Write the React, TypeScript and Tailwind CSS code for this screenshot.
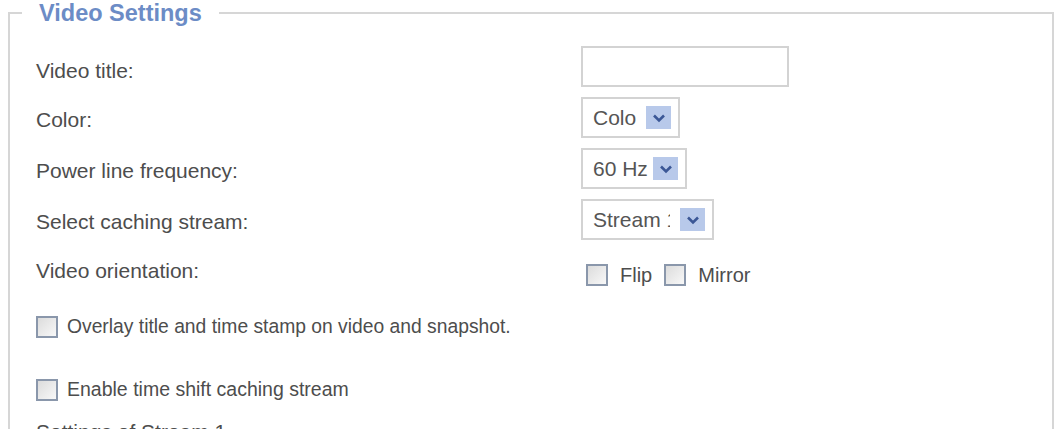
import React from 'react';

const Chevron = () => (
  <span className="w-[25px] h-[23px] bg-[#b8c9ea] flex items-center justify-center shrink-0">
    <svg width="14" height="10" viewBox="0 0 14 10">
      <path d="M2 2.5 L7 7.5 L12 2.5" fill="none" stroke="#3b5796" strokeWidth="2.6" />
    </svg>
  </span>
);

const Select = ({ value, width, textWidth }: { value: string; width: string; textWidth: string }) => (
  <div className={`${width} h-[41px] border-2 border-[#d3d3d3] bg-white flex items-center justify-between pl-[10px] pr-[7px]`}>
    <span className={`${textWidth} overflow-hidden whitespace-nowrap text-[21px] text-[#555]`}>{value}</span>
    <Chevron />
  </div>
);

const Checkbox = () => (
  <span className="w-[22px] h-[22px] border-2 border-[#8a97ab] bg-gradient-to-br from-[#dcdcdc] to-[#f8f8f8] inline-block shrink-0" />
);

const rows = [
  { label: 'Video title:', control: <div className="w-[208px] h-[41px] border-2 border-[#d3d3d3] bg-white" /> },
  { label: 'Color:', control: <Select value="Color" width="w-[99px]" textWidth="w-[44px]" /> },
  { label: 'Power line frequency:', control: <Select value="60 Hz" width="w-[106px]" textWidth="w-[58px]" /> },
  { label: 'Select caching stream:', control: <Select value="Stream 1" width="w-[133px]" textWidth="w-[77px]" /> },
];

export default function App() {
  return (
    <div className="bg-white h-[429px] overflow-hidden pl-[8px] pr-[5px]" style={{ fontFamily: '"Liberation Sans", Arial, sans-serif' }}>
      <fieldset className="border-2 border-[#d6d6d6] border-b-0 pb-4">
        <legend className="ml-[12px] px-[17px] text-[23.5px] leading-[26px] font-bold text-[#6c8cc6]">Video Settings</legend>

        <div className="pl-[26px] pt-[20px]">
          {rows.map((row, i) => (
            <div key={row.label} className="flex items-center h-[41px] mb-[10px]">
              <span className={`w-[545px] ${i === 0 ? 'pt-[8px]' : 'pt-[5px]'} text-[21px] text-[#4d4d4d]`}>{row.label}</span>
              {row.control}
            </div>
          ))}

          <div className="flex items-center h-[41px] mt-[5px]">
            <span className="w-[545px] text-[21px] text-[#4d4d4d]">Video orientation:</span>
            <div className="flex items-center pl-[5px] pt-[8px] text-[20px] text-[#4d4d4d]">
              <Checkbox />
              <span className="ml-[12px] mr-[12px]">Flip</span>
              <Checkbox />
              <span className="ml-[12px]">Mirror</span>
            </div>
          </div>

          <div className="flex items-center mt-[22px] text-[19.3px] text-[#4d4d4d]">
            <Checkbox />
            <span className="ml-[9px]">Overlay title and time stamp on video and snapshot.</span>
          </div>

          <div className="flex items-center mt-[33px] text-[19.5px] text-[#4d4d4d]">
            <Checkbox />
            <span className="ml-[9px]">Enable time shift caching stream</span>
          </div>

          <div className="mt-[14px] text-[21px] leading-[28px] text-[#4d4d4d]">Settings of Stream 1</div>
        </div>
      </fieldset>
    </div>
  );
}
